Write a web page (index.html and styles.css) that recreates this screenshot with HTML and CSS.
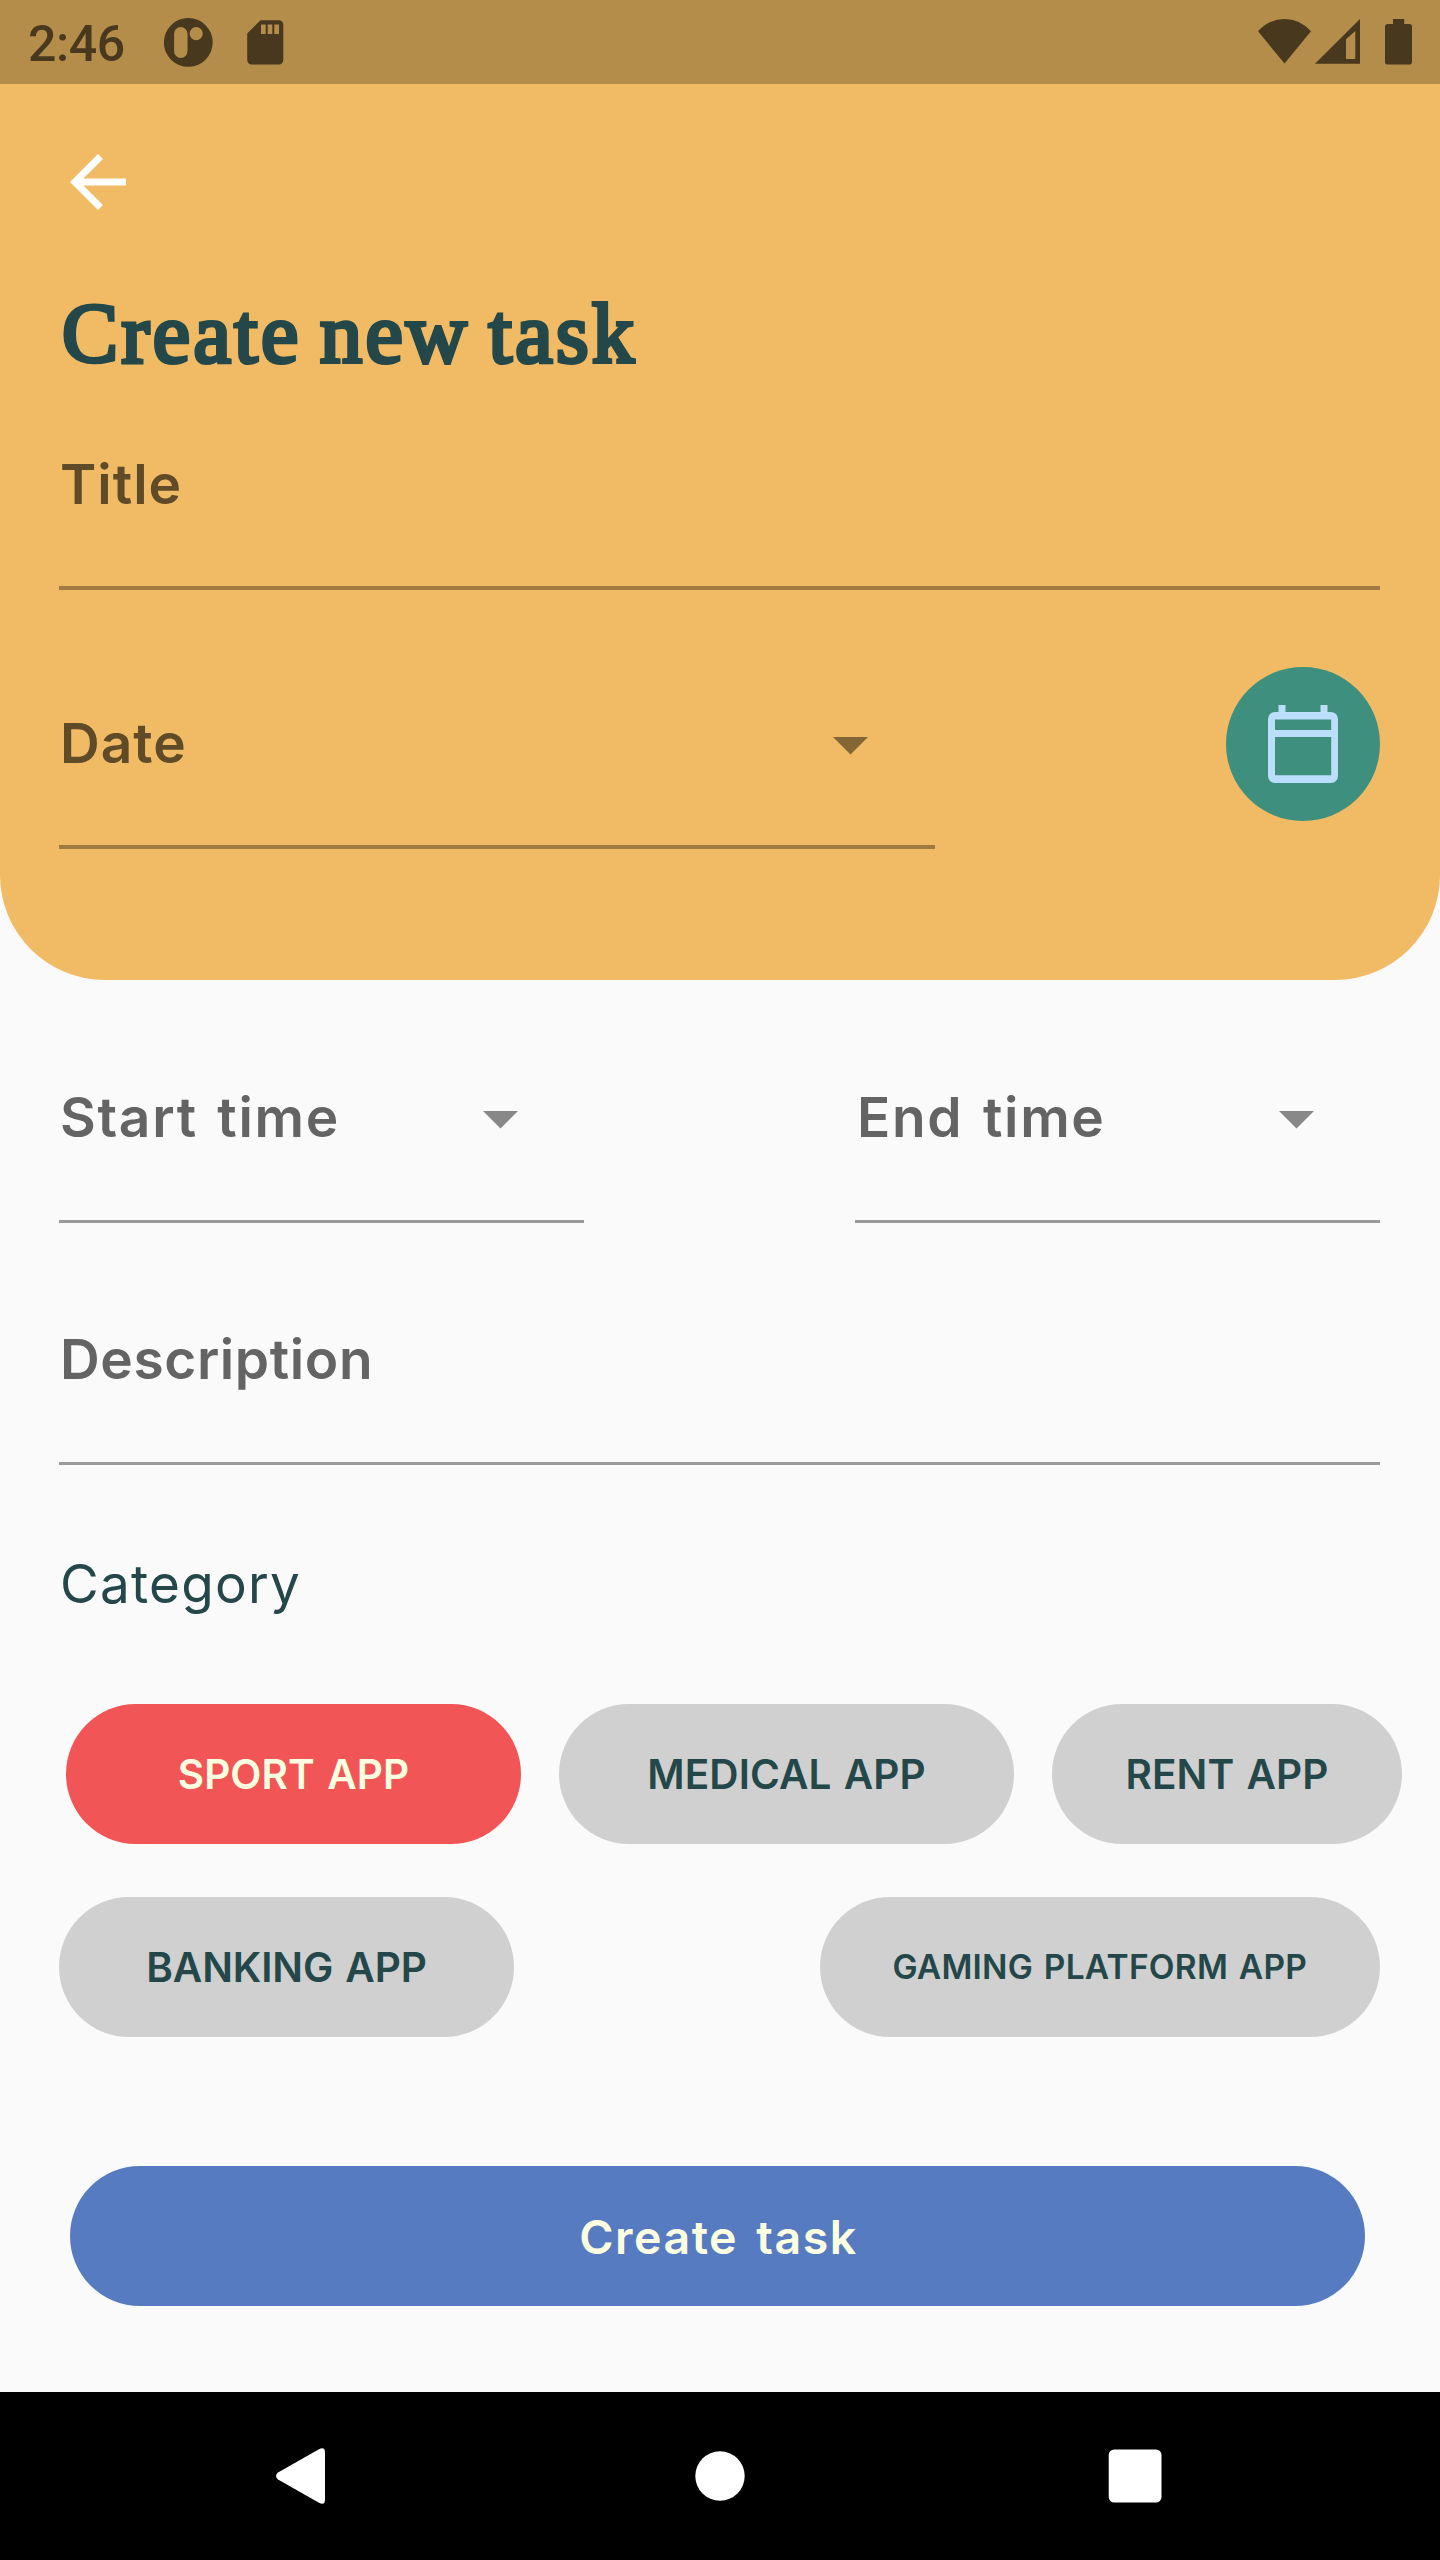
FILE: index.html
```html
<!DOCTYPE html>
<html lang="en">
<head>
<meta charset="utf-8">
<title>Create new task</title>
<link rel="stylesheet" href="styles.css">
</head>
<body>
<div class="screen">
  <div class="status-bar">
    <span class="clock">2:46</span>
    <svg class="status-icons" width="120" height="84" viewBox="164 0 120 84">
      <path fill-rule="evenodd" d="M188.3 18a24.4 24.4 0 1 0 0 48.8 24.4 24.4 0 1 0 0-48.8zM180.8 27a6.7 6.7 0 0 1 6.7 6.7v17.6a6.7 6.7 0 0 1-13.4 0V33.7a6.7 6.7 0 0 1 6.7-6.7zM196.2 27a6.6 6.6 0 1 1 0 13.2 6.6 6.6 0 1 1 0-13.2z"/>
      <path fill-rule="evenodd" d="M260.5 20.3h18.5a4.3 4.3 0 0 1 4.3 4.3v35.5a4.3 4.3 0 0 1-4.3 4.3h-27.5a4.3 4.3 0 0 1-4.3-4.3V33.5zM261 24.5v9.5h4.7v-9.5zM267.7 24.5v9.5h4.6v-9.5zM274.3 24.5v9.5h4.7v-9.5z"/>
    </svg>
    <svg class="status-system" width="156" height="84" viewBox="1257 0 156 84">
      <path d="M1258 31.3Q1269 19 1284.5 19T1311 31.3L1284.5 63.5z"/>
      <path fill-rule="evenodd" d="M1315 63.8L1360 19v44.8zM1346 39.3V59h9.3V31z"/>
      <path d="M1393 19h11.2v5h5a2.8 2.8 0 0 1 2.8 2.8v34.9a2.8 2.8 0 0 1-2.8 2.8h-21.4a2.8 2.8 0 0 1-2.8-2.8V26.8a2.8 2.8 0 0 1 2.8-2.8h5.2z"/>
    </svg>
  </div>

  <header class="header">
    <svg class="back" width="84" height="84" viewBox="0 0 24 24"><path d="M20 11H7.83l5.59-5.59L12 4l-8 8 8 8 1.41-1.41L7.83 13H20v-2z"/></svg>
    <h1 class="heading">Create new task</h1>
    <div class="field on-amber"><span class="label">Title</span></div>
    <div class="date-row">
      <div class="field on-amber date-field">
        <span class="label">Date</span>
        <svg class="arrow" width="35" height="17.5" viewBox="0 0 10 5"><path d="M0 0h10L5 5z"/></svg>
      </div>
      <div class="calendar">
        <svg width="72" height="80" viewBox="0 0 72 80">
          <path d="M11.5 1h7v10h-7zM53.5 1h7v10h-7z"/>
          <path fill-rule="evenodd" d="M8 8h56a7 7 0 0 1 7 7v57a7 7 0 0 1-7 7H8a7 7 0 0 1-7-7V15a7 7 0 0 1 7-7zM8 15.5v10.500h56.200v-10.500zM8 33v38.200h56.200V33z"/>
        </svg>
      </div>
    </div>
  </header>

  <main class="form">
    <div class="time-row">
      <div class="field time-field">
        <span class="label spaced">Start time</span>
        <svg class="arrow" width="35" height="17.5" viewBox="0 0 10 5"><path d="M0 0h10L5 5z"/></svg>
      </div>
      <div class="field time-field">
        <span class="label spaced end-label">End time</span>
        <svg class="arrow" width="35" height="17.5" viewBox="0 0 10 5"><path d="M0 0h10L5 5z"/></svg>
      </div>
    </div>
    <div class="field description"><span class="label">Description</span></div>
    <h2 class="category">Category</h2>
    <div class="chips chips-first">
      <div class="chip selected">SPORT APP</div>
      <div class="chip">MEDICAL APP</div>
      <div class="chip chip-narrow">RENT APP</div>
    </div>
    <div class="chips chips-second">
      <div class="chip banking">BANKING APP</div>
      <div class="chip chip-wide">GAMING PLATFORM APP</div>
    </div>
    <div class="submit">Create task</div>
  </main>

  <nav class="nav-bar">
    <svg width="1440" height="168" viewBox="0 0 1440 168">
      <path d="M278 80.5L319 57.2Q325 54.2 325 60.5V107.5Q325 113.8 319 110.8L278 87.5Q274 84 278 80.5z"/>
      <circle cx="720" cy="84" r="24.7"/>
      <rect x="1108.7" y="57.5" width="52.8" height="53" rx="5.5"/>
    </svg>
  </nav>
</div>
</body>
</html>
```
FILE: styles.css
```css
* { box-sizing: border-box; }

body {
  margin: 0;
  background: #fafafa;
  font-family: Inter, "Noto Sans", sans-serif;
}

svg { display: block; flex: none; }

.screen {
  width: 1440px;
  height: 2560px;
  display: flex;
  flex-direction: column;
  overflow: hidden;
}

.status-bar {
  height: 84px;
  flex: none;
  display: flex;
  background: #b38d49;
  color: #48381e;
  fill: #48381e;
  padding: 0 27px 0 28px;
}

.clock {
  width: 136px;
  padding-top: 2px;
  font: 500 50px/84px Roboto, sans-serif;
  letter-spacing: -0.4px;
}

.status-system { margin-left: auto; }

.header {
  height: 896px;
  flex: none;
  padding: 56px 60px 0 59px;
  background: #f0bb64;
  border-radius: 0 0 105px 105px;
}

.back { margin-left: -3px; fill: #fff; }

.heading {
  margin: 60px 0;
  padding-left: 3px;
  font: 400 84px/100px "Liberation Serif", serif;
  letter-spacing: 3.4px;
  word-spacing: -6px;
  -webkit-text-stroke: 4px #24474a;
  color: #24474a;
}

.field {
  height: 146px;
  display: flex;
  justify-content: space-between;
  border-bottom: 3px solid #9b9b9b;
}

.on-amber { border-bottom: 4px solid #9f7b42; }

.label {
  padding-left: 1px;
  font-size: 55px;
  line-height: 80px;
  font-weight: 600;
  letter-spacing: 0.6px;
  white-space: nowrap;
  color: #646464;
}

.on-amber .label { color: #604b28; letter-spacing: 1px; }

.label.spaced { letter-spacing: 1.7px; word-spacing: 4px; }

.label.end-label { padding-left: 2px; }

.arrow {
  margin: 34px 66.5px 0 0;
  fill: #888;
}

.on-amber .arrow { fill: #836636; }

.date-row {
  height: 182.5px;
  margin-top: 76.5px;
  display: flex;
  justify-content: space-between;
}

.date-field { width: 875.5px; align-self: flex-end; }

.calendar {
  width: 154px;
  height: 154px;
  display: flex;
  align-items: center;
  justify-content: center;
  border-radius: 50%;
  background: #3e8f7d;
  fill: #bbdefb;
}

.form { flex: 1; padding: 97px 60px 0 59px; }

.time-row { display: flex; justify-content: space-between; }

.time-field { width: 525px; }

.description { margin-top: 96px; }

.category {
  margin: 79px 0 0;
  padding-left: 1px;
  font-size: 53px;
  line-height: 80px;
  font-weight: 400;
  letter-spacing: 1.26px;
  color: #24474a;
}

.chips { display: flex; }

.chips-first {
  width: max-content;
  margin-top: 80.3px;
  padding-left: 7px;
  gap: 38px;
}

.chips-second { margin-top: 52.5px; justify-content: space-between; }

.chip {
  width: 455px;
  height: 140px;
  padding-top: 1px;
  border-radius: 70px;
  background: #d0d0d0;
  color: #24474a;
  font-size: 40.5px;
  line-height: 140px;
  font-weight: 600;
  letter-spacing: 0.1px;
  word-spacing: 2px;
  text-align: center;
  white-space: nowrap;
}

.selected { background: #f15556; color: #fcffe0; }

.chip-narrow { width: 350px; }

.banking { letter-spacing: -0.1px; }

.chip-wide {
  width: 560.5px;
  padding-top: 0;
  font-size: 33.5px;
  letter-spacing: 0.25px;
}

.submit {
  width: 1295px;
  height: 140px;
  margin: 129.5px 0 0 11px;
  padding: 1px 0 0 2px;
  border-radius: 70px;
  background: #567bc0;
  color: #fcffe0;
  font-size: 46.5px;
  line-height: 140px;
  font-weight: 600;
  letter-spacing: 1.5px;
  word-spacing: 5px;
  text-align: center;
}

.nav-bar {
  height: 168px;
  flex: none;
  background: #000;
  fill: #fff;
}
```
